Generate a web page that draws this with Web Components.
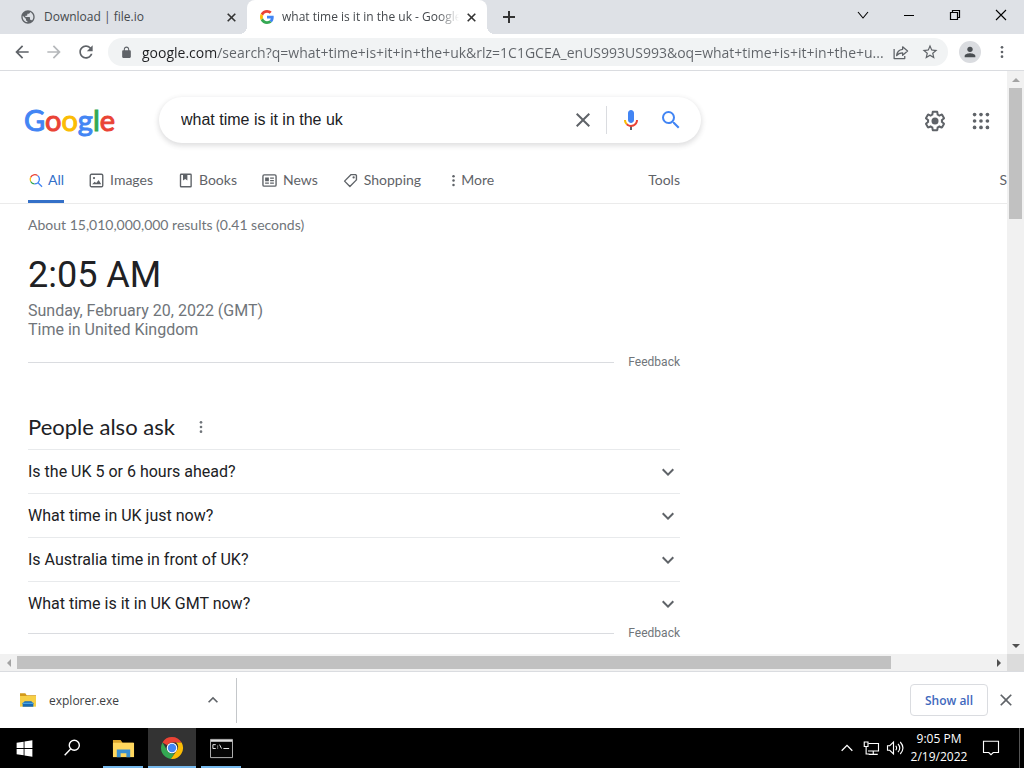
<!DOCTYPE html>
<html lang="en">
<head>
<meta charset="utf-8">
<title>what time is it in the uk - Google Search</title>
<style>
  html, body {
    height: 100%;
    margin: 0;
  }
  body {
    overflow: hidden;
    font-family: "Open Sans", "Noto Sans", sans-serif;
    font-size: 12px;
    color: #202124;
    --ui-font: "Open Sans", "Noto Sans", sans-serif;
    --product-font: Lato, "Open Sans", sans-serif;
    --text-font: Roboto, Arial, sans-serif;
    --grey: #5f6368;
    --soft: #70757a;
    --blue: #3470c8;
    --line: #dadce0;
  }
</style>
</head>
<body>
<desktop-screen></desktop-screen>

<script>
const ICONS = {
  globe: '<path d="M12 2C6.48 2 2 6.48 2 12s4.48 10 10 10 10-4.48 10-10S17.52 2 12 2zm-1 17.93c-3.95-.49-7-3.85-7-7.93 0-.62.08-1.21.21-1.79L9 15v1c0 1.1.9 2 2 2v1.93zm6.9-2.54c-.26-.81-1-1.39-1.9-1.39h-1v-3c0-.55-.45-1-1-1H8v-2h2c.55 0 1-.45 1-1V7h2c1.1 0 2-.9 2-2v-.41c2.93 1.19 5 4.06 5 7.41 0 2.08-.8 3.97-2.1 5.39z"/>',
  g: '<g transform="scale(.5)"><path fill="#ea4335" d="M24 9.500c3.540 0 6.710 1.220 9.210 3.600l6.850-6.850C35.900 2.380 30.470 0 24 0 14.620 0 6.510 5.380 2.560 13.220l7.980 6.190C12.430 13.720 17.740 9.500 24 9.500z"/><path fill="#4285f4" d="M46.980 24.550c0-1.570-.15-3.090-.38-4.550H24v9.020h12.940c-.58 2.960-2.260 5.480-4.780 7.180l7.730 6c4.510-4.180 7.090-10.360 7.090-17.650z"/><path fill="#fbbc05" d="M10.530 28.590c-.48-1.450-.76-2.990-.76-4.590s.27-3.140.76-4.590l-7.980-6.190C.92 16.460 0 20.120 0 24c0 3.880.92 7.540 2.560 10.780l7.970-6.190z"/><path fill="#34a853" d="M24 48c6.480 0 11.930-2.130 15.890-5.810l-7.730-6c-2.150 1.450-4.920 2.300-8.160 2.300-6.260 0-11.570-4.220-13.470-9.910l-7.980 6.190C6.510 42.620 14.620 48 24 48z"/></g>',
  close: '<path d="M19 6.410L17.590 5 12 10.590 6.410 5 5 6.410 10.590 12 5 17.590 6.410 19 12 13.410 17.590 19 19 17.590 13.410 12z"/>',
  boldClose: '<path fill="none" stroke="currentColor" stroke-width="3" d="M5 5l14 14M19 5L5 19"/>',
  plus: '<path fill="none" stroke="currentColor" stroke-width="3" d="M12 3v18M3 12h18"/>',
  winDown: '<path fill="none" stroke="currentColor" stroke-width="1.100" d="M7 9l5 6 5-6"/>',
  winMin: '<path d="M7 12h10v1H7z"/>',
  winMax: '<path fill="none" stroke="currentColor" stroke-width="1.200" d="M7.500 9.500h7v7h-7zM9.500 9.500v-2h7v7h-2"/>',
  winClose: '<path fill="none" stroke="currentColor" stroke-width="1.100" d="M7 7l10 10M17 7L7 17"/>',
  back: '<path d="M20 11H7.830l5.590-5.590L12 4l-8 8 8 8 1.410-1.410L7.830 13H20z"/>',
  forward: '<path d="M4 11h12.170l-5.590-5.590L12 4l8 8-8 8-1.410-1.410L16.170 13H4z"/>',
  reload: '<path d="M17.650 6.350C16.200 4.900 14.210 4 12 4c-4.420 0-7.990 3.580-7.990 8s3.570 8 7.990 8c3.730 0 6.840-2.550 7.730-6h-2.080c-.82 2.330-3.040 4-5.650 4-3.310 0-6-2.690-6-6s2.690-6 6-6c1.660 0 3.140.69 4.220 1.780L13 11h7V4z"/>',
  lock: '<path d="M18 8h-1V6c0-2.760-2.240-5-5-5S7 3.240 7 6v2H6c-1.100 0-2 .9-2 2v10c0 1.100.9 2 2 2h12c1.100 0 2-.9 2-2V10c0-1.100-.9-2-2-2zM9 6c0-1.660 1.340-3 3-3s3 1.340 3 3v2H9z"/>',
  share: '<path fill="none" stroke="currentColor" stroke-width="1.800" stroke-linejoin="round" d="M3 7v13.500h15V17M15 4l7 6-7 6v-3.500c-4 0-6.500 1-8.500 4 .5-5 3.500-8.500 8.500-9z"/>',
  star: '<path d="M22 9.240l-7.190-.62L12 2 9.190 8.630 2 9.240l5.460 4.730L5.820 21 12 17.270 18.180 21l-1.630-7.030zM12 15.400l-3.760 2.270 1-4.280-3.320-2.880 4.380-.38L12 6.100l1.710 4.040 4.380.38-3.320 2.880 1 4.280z"/>',
  person: '<circle cx="12" cy="8" r="4"/><path d="M12 14c-2.700 0-8 1.300-8 4v2h16v-2c0-2.700-5.300-4-8-4z"/>',
  dots: '<circle cx="12" cy="5" r="2"/><circle cx="12" cy="12" r="2"/><circle cx="12" cy="19" r="2"/>',
  mic: '<path fill="#4285f4" d="M12 15c1.660 0 3-1.310 3-2.970V5.010C15 3.350 13.660 2 12 2S9 3.340 9 5.010v7.020C9 13.690 10.340 15 12 15z"/><path fill="#5f6368" d="M11 18.080h2V22h-2z"/><path fill="#fbbc05" d="M7.050 16.870C5.780 15.540 5 14.040 5 12h2c0 1.450.56 2.420 1.470 3.380v.32z"/><path fill="#ea4335" d="M12 16.930a4.970 5.250 0 0 1-3.540-1.550l-1.410 1.490C8.310 18.210 10.070 19 12 19c3.870 0 6.990-2.920 6.990-7H17c0 2.920-2.240 4.930-5 4.930z"/>',
  search: '<path d="M15.500 14h-.79l-.28-.27A6.471 6.471 0 0 0 16 9.500 6.500 6.500 0 1 0 9.500 16c1.610 0 3.090-.59 4.230-1.570l.27.28v.79l5 4.990L20.490 19zm-6 0C7.010 14 5 11.990 5 9.500S7.010 5 9.500 5 14 7.010 14 9.500 11.990 14 9.500 14z"/>',
  searchColor: '<g fill="none" stroke-width="2"><path stroke="#ea4335" d="M4.200 7A7.500 7.500 0 0 1 15.500 4.200"/><path stroke="#fbbc05" d="M4.200 13.500A7.500 7.500 0 0 1 4.200 7"/><path stroke="#34a853" d="M10.500 17.500A7.500 7.500 0 0 1 4.200 13.500"/><path stroke="#4285f4" d="M15.500 4.200A7.500 7.500 0 0 1 10.500 17.500M16 15.500l6.500 6.500"/></g>',
  gear: '<path fill-rule="evenodd" d="M13.850 22.250h-3.700c-.74 0-1.360-.54-1.450-1.270l-.27-1.890c-.27-.14-.53-.29-.79-.46l-1.800.72c-.7.26-1.470-.03-1.810-.65L2.200 15.530c-.35-.66-.2-1.440.36-1.880l1.530-1.190c-.01-.15-.02-.3-.02-.46 0-.15.01-.31.02-.46l-1.520-1.190c-.59-.45-.74-1.260-.37-1.880l1.850-3.190c.34-.62 1.110-.9 1.790-.63l1.810.73c.26-.17.52-.32.78-.46l.27-1.910c.09-.7.71-1.250 1.440-1.250h3.700c.74 0 1.360.54 1.450 1.270l.27 1.890c.27.14.53.29.79.46l1.800-.72c.71-.26 1.480.03 1.820.65l1.840 3.180c.36.66.2 1.440-.36 1.880l-1.520 1.190c.01.15.02.3.02.46s-.01.31-.02.46l1.520 1.190c.56.45.72 1.230.37 1.860l-1.860 3.220c-.34.62-1.110.9-1.800.63l-1.800-.72c-.26.17-.52.32-.78.46l-.27 1.910c-.1.68-.72 1.220-1.460 1.220zm-3.230-2h2.760l.37-2.550.53-.22c.44-.18.88-.44 1.340-.78l.45-.34 2.380.96 1.380-2.400-2.030-1.580.07-.56c.03-.26.06-.51.06-.78s-.03-.53-.06-.78l-.07-.56 2.030-1.580-1.390-2.400-2.390.96-.45-.35c-.42-.32-.87-.58-1.330-.77l-.52-.22-.37-2.550h-2.760l-.37 2.550-.53.21c-.44.19-.88.44-1.340.79l-.45.33-2.380-.95-1.390 2.390 2.030 1.580-.07.56a7 7 0 0 0-.06.79c0 .26.02.53.06.78l.07.56-2.030 1.580 1.380 2.400 2.390-.96.45.35c.43.33.86.58 1.330.77l.53.22z"/><circle cx="12" cy="12" r="3.500"/>',
  apps: '<g><circle cx="5" cy="5" r="2"/><circle cx="12" cy="5" r="2"/><circle cx="19" cy="5" r="2"/><circle cx="5" cy="12" r="2"/><circle cx="12" cy="12" r="2"/><circle cx="19" cy="12" r="2"/><circle cx="5" cy="19" r="2"/><circle cx="12" cy="19" r="2"/><circle cx="19" cy="19" r="2"/></g>',
  images: '<rect x="2" y="2" width="20" height="20" rx="2" fill="none" stroke="currentColor" stroke-width="2.200"/><circle cx="8" cy="8" r="1.800"/><path d="M5 18l4-4 2.500 2 4-5 4 7z"/>',
  book: '<rect x="4" y="2" width="17" height="20" rx="1" fill="none" stroke="currentColor" stroke-width="2.200"/><path d="M8 3h7v9l-3.500-2.500L8 12z"/>',
  news: '<rect x="1.500" y="3" width="21" height="18" rx="2" fill="none" stroke="currentColor" stroke-width="2.200"/><path d="M5 7h6v6H5zM5 15h6v2H5zM13 7h6v2h-6zM13 11h6v2h-6zM13 15h6v2h-6z"/>',
  tag: '<path fill="none" stroke="currentColor" stroke-width="2.200" stroke-linejoin="round" d="M13 2.500h7l1.500 1.500v7L11 21.500 2.500 13z"/><circle cx="17" cy="7" r="1.800"/>',
  down: '<path d="M16.590 8.590L12 13.170 7.410 8.590 6 10l6 6 6-6z"/>',
  up: '<path d="M7.410 15.410L12 10.830l4.590 4.580L18 14l-6-6-6 6z"/>',
  start: '<path d="M3 5.300l8-1.100v7.300H3zM12 4l9-1.300v8.800h-9zM3 12.500h8v7.300l-8-1.100zM12 12.500h9v8.800L12 20z"/>',
  lens: '<g fill="none" stroke="currentColor" stroke-width="1.500"><circle cx="14.500" cy="9" r="5.500"/><path d="M10.500 13L4 20"/></g>',
  folder: '<path fill="#dba52c" d="M1 3h8l2 3h11v6H1z"/><path fill="#ffd75e" d="M1 6h22v15H1z"/><path fill="#3a8fd0" d="M5 13h14v8h-4v-4H9v4H5z"/>',
  exe: '<path fill="#d39a1b" d="M0 2h8l2 3h14v6H0z"/><path fill="#f7cf45" d="M0 6h24v16H0z"/><path fill="#1769b5" d="M4 22v-5l3-3h10l3 3v5z"/><path fill="#4ba4df" d="M4 16h16v2H4z"/>',
  chrome: '<path fill="#ea4335" d="M12 1a11 11 0 0 1 9.600 5.600H12A5.400 5.400 0 0 0 7.300 9.300L2.500 6.400A11 11 0 0 1 12 1z"/><path fill="#34a853" d="M2.500 6.400l4.900 8.300A5.400 5.400 0 0 0 12 17.400l2.400.2-3.500 5.300A11 11 0 0 1 2.500 6.400z"/><path fill="#fbbc05" d="M21.600 6.600A11 11 0 0 1 10.900 22.900l5.700-8.200A5.400 5.400 0 0 0 16 6.600z"/><circle cx="12" cy="12" r="5.300" fill="#fff"/><circle cx="12" cy="12" r="4.200" fill="#4285f4"/>',
  terminal: '<path fill="#050505" stroke="#b8b8b8" stroke-width="1" d="M.5 2.500h23v19H.5z"/><path fill="#ddd" d="M1 3h22v2H1z"/><path fill="none" stroke="#eee" d="M6 8H3v4h3M8 9v1M8 11v1M10 8l2 4M14 12h6"/>',
  network: '<path fill="none" stroke="currentColor" stroke-width="1.500" d="M9 6h13v10H8M15 16v4M9 20.500h12M3 4h5v6H3zM5.500 10v10H10"/>',
  speaker: '<path fill="none" stroke="currentColor" stroke-width="1.500" d="M2 9h3l5-5v16l-5-5H2zM13 9c1.500 2 1.500 4 0 6M16 6.500c3 3.500 3 7.500 0 11M19 4c4.500 5 4.500 11 0 16"/>',
  trayUp: '<path fill="none" stroke="currentColor" stroke-width="2" d="M4 16l8-8 8 8"/>',
  notice: '<path fill="none" stroke="currentColor" stroke-width="1.500" d="M2 3h20v15h-7l-3 3-3-3H2z"/>'
};

class UiIcon extends HTMLElement {
  constructor() {
    super();
    this.attachShadow({ mode: 'open' });
  }

  connectedCallback() {
    const size = this.getAttribute('size') || 16;
    this.shadowRoot.innerHTML = `
      <style>
        :host { display: inline-flex; flex: none; }
        svg { display: block; fill: currentColor; }
      </style>
      <svg width="${size}" height="${size}" viewBox="0 0 24 24" aria-hidden="true">${ICONS[this.getAttribute('name')]}</svg>
    `;
  }
}
customElements.define('ui-icon', UiIcon);

// shared reset for the buttons and links inside each shadow root
const RESET = `
  * { box-sizing: border-box; }
  button, input { font: inherit; color: inherit; background: none; border: 0; padding: 0; margin: 0; outline: 0; }
  button { display: inline-flex; align-items: center; justify-content: center; cursor: pointer; }
  a { color: inherit; text-decoration: none; }
`;

class BrowserTab extends HTMLElement {
  constructor() {
    super();
    this.attachShadow({ mode: 'open' }).innerHTML = `
      <style>
        ${RESET}
        :host {
          display: flex;
          align-items: center;
          flex: 0 1 240px;
          height: 34px;
          min-width: 0;
          padding: 0 8px 0 13px;
          box-sizing: border-box;
          color: #45494d;
        }
        :host([active]) {
          position: relative;
          background: #fff;
          border-radius: 8px 8px 0 0;
        }
        :host([active])::before, :host([active])::after {
          content: "";
          position: absolute;
          bottom: 0;
          width: 8px;
          height: 8px;
        }
        :host([active])::before { left: -8px; background: radial-gradient(circle at 0 0, transparent 8px, #fff 8px); }
        :host([active])::after { right: -8px; background: radial-gradient(circle at 100% 0, transparent 8px, #fff 8px); }
        .title {
          flex: 1;
          overflow: hidden;
          white-space: nowrap;
          margin: 0 4px 0 8px;
          line-height: 18px;
        }
        :host([active]) .title {
          -webkit-mask-image: linear-gradient(to right, #000 88%, transparent);
          mask-image: linear-gradient(to right, #000 88%, transparent);
        }
        button { width: 16px; height: 16px; color: #333; }
      </style>
      <slot name="icon"></slot>
      <span class="title"><slot></slot></span>
      <button aria-label="Close tab"><ui-icon name="boldClose" size="13"></ui-icon></button>
    `;
  }
}
customElements.define('browser-tab', BrowserTab);

class TabStrip extends HTMLElement {
  constructor() {
    super();
    this.attachShadow({ mode: 'open' }).innerHTML = `
      <style>
        ${RESET}
        :host { display: flex; height: 34px; padding-left: 7px; background: #dee1e6; }
        .new { width: 28px; margin-left: 8px; color: #333; }
        .window { display: flex; margin-left: auto; height: 29px; color: #000; }
        .window button { width: 46px; }
      </style>
      <browser-tab><ui-icon slot="icon" name="globe" size="16" style="color:#5f6368"></ui-icon>Download | file.io</browser-tab>
      <browser-tab active><ui-icon slot="icon" name="g" size="14"></ui-icon>what time is it in the uk - Google</browser-tab>
      <button class="new" aria-label="New tab"><ui-icon name="plus" size="16"></ui-icon></button>
      <div class="window">
        <button aria-label="Search tabs"><ui-icon name="winDown" size="24"></ui-icon></button>
        <button aria-label="Minimize"><ui-icon name="winMin" size="24"></ui-icon></button>
        <button aria-label="Restore"><ui-icon name="winMax" size="24"></ui-icon></button>
        <button aria-label="Close"><ui-icon name="winClose" size="24"></ui-icon></button>
      </div>
    `;
  }
}
customElements.define('tab-strip', TabStrip);

class BrowserToolbar extends HTMLElement {
  constructor() {
    super();
    this.attachShadow({ mode: 'open' }).innerHTML = `
      <style>
        ${RESET}
        :host {
          display: flex;
          align-items: center;
          height: 37px;
          padding: 0 6px;
          box-sizing: border-box;
          border-bottom: 1px solid var(--line);
          background: #fff;
          color: var(--grey);
        }
        button { width: 32px; height: 28px; }
        .forward { color: #b5b8bb; }
        .omnibox {
          display: flex;
          align-items: center;
          flex: 1;
          min-width: 0;
          height: 28px;
          margin: 0 6px;
          padding: 0 2px 0 12px;
          border-radius: 14px;
          background: #f1f3f4;
        }
        .omnibox .share { width: 28px; }
        input {
          flex: 1;
          min-width: 0;
          height: 28px;
          margin-left: 9px;
          font-size: 14px;
          color: transparent;
          background: linear-gradient(to right, #202124 76px, #5f6368 76px);
          -webkit-background-clip: text;
          background-clip: text;
        }
        .avatar {
          width: 22px;
          height: 22px;
          margin: 0 5px;
          border-radius: 50%;
          background: #dadce0;
          color: #4a4e52;
        }
      </style>
      <button aria-label="Back"><ui-icon name="back" size="20"></ui-icon></button>
      <button aria-label="Forward" class="forward"><ui-icon name="forward" size="20"></ui-icon></button>
      <button aria-label="Reload"><ui-icon name="reload" size="20"></ui-icon></button>
      <div class="omnibox">
        <ui-icon name="lock" size="13"></ui-icon>
        <input type="text" aria-label="Address and search bar" value="google.com/search?q=what+time+is+it+in+the+uk&amp;rlz=1C1GCEA_enUS993US993&amp;oq=what+time+is+it+in+the+u...">
        <button class="share" aria-label="Share this page"><ui-icon name="share" size="17"></ui-icon></button>
        <button aria-label="Bookmark this tab"><ui-icon name="star" size="18"></ui-icon></button>
      </div>
      <button class="avatar" aria-label="Profile"><ui-icon name="person" size="16"></ui-icon></button>
      <button aria-label="Menu"><ui-icon name="dots" size="16"></ui-icon></button>
    `;
  }
}
customElements.define('browser-toolbar', BrowserToolbar);

class SearchHeader extends HTMLElement {
  constructor() {
    super();
    this.attachShadow({ mode: 'open' }).innerHTML = `
      <style>
        ${RESET}
        :host { display: flex; align-items: center; padding: 26px 6px 0 24px; color: var(--grey); }
        .logo {
          flex: none;
          width: 135px;
          font: 29px/46px var(--product-font);
          -webkit-text-stroke: 1px currentColor;
          color: #4285f4;
        }
        .r { color: #ea4335; }
        .y { color: #fbbc05; }
        .n { color: #34a853; }
        form {
          display: flex;
          align-items: center;
          flex: 0 1 542px;
          height: 46px;
          padding: 0 14px 0 22px;
          border-radius: 24px;
          background: #fff;
          box-shadow: 0 2px 5px 1px rgba(64, 60, 67, .16);
        }
        input { flex: 1; min-width: 0; font: 16px/24px "Liberation Sans", Arial, sans-serif; color: #202124; }
        button { width: 40px; height: 44px; }
        .clear { width: 48px; border-right: 1px solid var(--line); height: 28px; }
        .mic { width: 48px; }
        .lens { width: 32px; color: #4285f4; }
        .tools { display: flex; gap: 6px; margin-left: auto; padding-top: 2px; }
      </style>
      <a class="logo" href="#" aria-label="Google">G<span class="r">o</span><span class="y">o</span>g<span class="n">l</span><span class="r">e</span></a>
      <form role="search">
        <input type="text" aria-label="Search" value="what time is it in the uk">
        <button type="button" class="clear" aria-label="Clear"><ui-icon name="close" size="24"></ui-icon></button>
        <button type="button" class="mic" aria-label="Search by voice"><ui-icon name="mic" size="24"></ui-icon></button>
        <button type="button" class="lens" aria-label="Google Search"><ui-icon name="search" size="24"></ui-icon></button>
      </form>
      <div class="tools">
        <button aria-label="Settings"><ui-icon name="gear" size="24"></ui-icon></button>
        <button aria-label="Google apps"><ui-icon name="apps" size="22"></ui-icon></button>
      </div>
    `;
  }
}
customElements.define('search-header', SearchHeader);

class SearchNav extends HTMLElement {
  constructor() {
    super();
    this.attachShadow({ mode: 'open' }).innerHTML = `
      <style>
        ${RESET}
        :host {
          display: flex;
          height: 61px;
          padding-left: 28px;
          box-sizing: border-box;
          border-bottom: 1px solid #ebebeb;
          font: 14px/20px var(--product-font);
          color: var(--grey);
        }
        nav { display: flex; justify-content: space-between; flex: 0 1 652px; }
        .links { display: flex; gap: 25px; }
        a, button { display: flex; align-items: center; gap: 6px; padding-top: 14px; height: 60px; }
        .active { color: var(--blue); border-bottom: 3px solid var(--blue); padding-top: 17px; gap: 5px; }
        .more { gap: 0; }
        .safe { margin-left: auto; }
      </style>
      <nav>
        <div class="links">
          <a href="#" class="active"><ui-icon name="searchColor" size="15"></ui-icon>All</a>
          <a href="#"><ui-icon name="images" size="15"></ui-icon>Images</a>
          <a href="#"><ui-icon name="book" size="15"></ui-icon>Books</a>
          <a href="#"><ui-icon name="news" size="15"></ui-icon>News</a>
          <a href="#"><ui-icon name="tag" size="15"></ui-icon>Shopping</a>
          <button class="more"><ui-icon name="dots" size="15"></ui-icon>More</button>
        </div>
        <button>Tools</button>
      </nav>
      <a href="#" class="safe">S</a>
    `;
  }
}
customElements.define('search-nav', SearchNav);

class FeedbackRule extends HTMLElement {
  constructor() {
    super();
    this.attachShadow({ mode: 'open' }).innerHTML = `
      <style>
        ${RESET}
        :host { display: flex; align-items: center; gap: 14px; font: 12px/16px var(--text-font); color: var(--soft); }
        hr { flex: 1; margin: 0; border: 0; border-top: 1px solid var(--line); }
      </style>
      <hr>
      <a href="#">Feedback</a>
    `;
  }
}
customElements.define('feedback-rule', FeedbackRule);

class TimeAnswer extends HTMLElement {
  constructor() {
    super();
    this.attachShadow({ mode: 'open' }).innerHTML = `
      <style>
        :host { display: block; font: 16px/19px var(--text-font); color: var(--soft); }
        .time { font-size: 36px; line-height: 40px; color: #202124; margin-bottom: 6px; }
      </style>
      <div class="time"><slot name="time"></slot></div>
      <div><slot name="date"></slot></div>
      <div><slot name="place"></slot></div>
    `;
  }
}
customElements.define('time-answer', TimeAnswer);

class PeopleAsk extends HTMLElement {
  constructor() {
    super();
    this.attachShadow({ mode: 'open' });
  }

  set questions(questions) {
    this._questions = questions;
    this.render();
  }

  render() {
    this.shadowRoot.innerHTML = `
      <style>
        ${RESET}
        :host { display: block; }
        header { display: flex; align-items: center; gap: 18px; height: 45px; }
        h2 { margin: 0; font: 22px/28px var(--product-font); color: #202124; }
        header button { color: var(--soft); }
        .question {
          width: 100%;
          height: 44px;
          justify-content: space-between;
          border-top: 1px solid #e8eaec;
          font: 16px/24px var(--text-font);
          color: #202124;
        }
        .question ui-icon { color: var(--grey); }
      </style>
      <header>
        <h2>People also ask</h2>
        <button aria-label="About this result"><ui-icon name="dots" size="16"></ui-icon></button>
      </header>
    `;
    this._questions.forEach((text) => {
      const button = document.createElement('button');
      button.className = 'question';
      button.innerHTML = `${text}<ui-icon name="down" size="24"></ui-icon>`;
      this.shadowRoot.appendChild(button);
    });
  }
}
customElements.define('people-ask', PeopleAsk);

class SearchPage extends HTMLElement {
  constructor() {
    super();
    this.attachShadow({ mode: 'open' }).innerHTML = `
      <style>
        :host { display: block; overflow: hidden; background: #fff; min-width: 0; min-height: 0; }
        main { max-width: 652px; padding-left: 28px; }
        .stats { margin: 11px 0 20px; font: 14px/20px var(--product-font); color: var(--soft); }
        .first { margin-top: 15px; }
        people-ask { margin-top: 34px; }
      </style>
      <search-header></search-header>
      <search-nav></search-nav>
      <main>
        <p class="stats">About 15,010,000,000 results (0.41 seconds)</p>
        <time-answer>
          <span slot="time">2:05 AM</span>
          <span slot="date">Sunday, February 20, 2022 (GMT)</span>
          <span slot="place">Time in United Kingdom</span>
        </time-answer>
        <feedback-rule class="first"></feedback-rule>
        <people-ask></people-ask>
        <feedback-rule></feedback-rule>
      </main>
    `;
    this.shadowRoot.querySelector('people-ask').questions = [
      'Is the UK 5 or 6 hours ahead?',
      'What time in UK just now?',
      'Is Australia time in front of UK?',
      'What time is it in UK GMT now?'
    ];
  }
}
customElements.define('search-page', SearchPage);

class ScrollTrack extends HTMLElement {
  constructor() {
    super();
    this.attachShadow({ mode: 'open' }).innerHTML = `
      <style>
        :host { display: flex; background: #f1f1f1; }
        :host([vertical]) { flex-direction: column; }
        .arrow { display: flex; flex: 0 0 17px; align-items: center; justify-content: center; }
        .arrow::before { content: ""; border: 4px solid transparent; }
        .thumb { flex: var(--thumb); background: #c1c1c1; }
        .rest { flex: var(--rest); }
        :host(:not([vertical])) .thumb { margin: 2px 0; }
        :host([vertical]) .thumb { margin: 0 2px; }
        :host([vertical]) .start::before { border-top: 0; border-bottom-color: #a3a3a3; }
        :host([vertical]) .end::before { border-bottom: 0; border-top-color: #505050; }
        :host(:not([vertical])) .start::before { border-left: 0; border-right-color: #a3a3a3; }
        :host(:not([vertical])) .end::before { border-right: 0; border-left-color: #505050; }
      </style>
      <span class="arrow start"></span>
      <span class="thumb"></span>
      <span class="rest"></span>
      <span class="arrow end"></span>
    `;
  }
}
customElements.define('scroll-track', ScrollTrack);

class DownloadShelf extends HTMLElement {
  constructor() {
    super();
    this.attachShadow({ mode: 'open' }).innerHTML = `
      <style>
        ${RESET}
        :host {
          display: flex;
          align-items: center;
          height: 57px;
          padding-right: 8px;
          box-sizing: border-box;
          border-top: 1px solid var(--line);
          background: #fff;
          color: var(--grey);
        }
        .item {
          display: flex;
          align-items: center;
          width: 237px;
          height: 45px;
          padding: 0 13px 0 20px;
          border-right: 1px solid #c4c7ca;
        }
        .name { gap: 13px; color: #3c4043; }
        .item .toggle { margin-left: auto; width: 20px; height: 20px; }
        .all {
          width: 78px;
          height: 32px;
          margin-left: auto;
          margin-right: 8px;
          border: 1px solid var(--line);
          border-radius: 4px;
          font-weight: 600;
          color: #3f69bd;
        }
      </style>
      <div class="item">
        <button class="name"><ui-icon name="exe" size="16"></ui-icon>explorer.exe</button>
        <button class="toggle" aria-label="Download options"><ui-icon name="up" size="20"></ui-icon></button>
      </div>
      <button class="all">Show all</button>
      <button aria-label="Close downloads"><ui-icon name="close" size="20"></ui-icon></button>
    `;
  }
}
customElements.define('download-shelf', DownloadShelf);

class TaskBar extends HTMLElement {
  constructor() {
    super();
    this.attachShadow({ mode: 'open' }).innerHTML = `
      <style>
        ${RESET}
        :host { display: flex; height: 40px; background: #000; color: #fff; }
        .app { width: 48px; height: 40px; position: relative; }
        .open::after {
          content: "";
          position: absolute;
          left: 4px;
          right: 4px;
          bottom: 0;
          height: 2px;
          background: #76b9ed;
        }
        .apps { display: flex; }
        .opened { display: flex; gap: 1px; margin-left: 3px; }
        .current { background: #333; }
        .current::after { left: 0; right: 0; }
        .tray { display: flex; align-items: center; margin-left: auto; }
        .tray button { width: 24px; height: 40px; }
        .tray .clock { flex-direction: column; width: 64px; line-height: 18px; }
        .tray .notice { width: 40px; }
        .peek { width: 13px; height: 40px; }
        .peek::before { content: ""; display: block; width: 1px; height: 40px; margin-left: 8px; background: #555; }
      </style>
      <div class="apps">
        <button class="app" aria-label="Start"><ui-icon name="start" size="21"></ui-icon></button>
        <button class="app" aria-label="Search"><ui-icon name="lens" size="22"></ui-icon></button>
        <div class="opened">
          <button class="app open" aria-label="File Explorer"><ui-icon name="folder" size="23"></ui-icon></button>
          <button class="app open current" aria-label="Google Chrome"><ui-icon name="chrome" size="24"></ui-icon></button>
          <button class="app open" aria-label="Command Prompt"><ui-icon name="terminal" size="23"></ui-icon></button>
        </div>
      </div>
      <div class="tray">
        <button aria-label="Show hidden icons"><ui-icon name="trayUp" size="16"></ui-icon></button>
        <button aria-label="Network"><ui-icon name="network" size="18"></ui-icon></button>
        <button aria-label="Volume"><ui-icon name="speaker" size="18"></ui-icon></button>
        <button class="clock"><span>9:05 PM</span><span>2/19/2022</span></button>
        <button class="notice" aria-label="Notifications"><ui-icon name="notice" size="18"></ui-icon></button>
        <span class="peek"></span>
      </div>
    `;
  }
}
customElements.define('task-bar', TaskBar);

class DesktopScreen extends HTMLElement {
  constructor() {
    super();
    this.attachShadow({ mode: 'open' }).innerHTML = `
      <style>
        :host { display: flex; flex-direction: column; height: 100vh; font-family: var(--ui-font); }
        .view {
          display: grid;
          flex: 1;
          min-height: 0;
          grid-template-columns: minmax(0, 1fr) 17px;
          grid-template-rows: minmax(0, 1fr) 17px;
        }
        .down { --thumb: 131; --rest: 418; }
        .across { --thumb: 874; --rest: 99; }
        .corner { background: #dcdcdc; }
      </style>
      <tab-strip></tab-strip>
      <browser-toolbar></browser-toolbar>
      <div class="view">
        <search-page></search-page>
        <scroll-track vertical class="down"></scroll-track>
        <scroll-track class="across"></scroll-track>
        <span class="corner"></span>
      </div>
      <download-shelf></download-shelf>
      <task-bar></task-bar>
    `;
  }
}
customElements.define('desktop-screen', DesktopScreen);
</script>
</body>
</html>
